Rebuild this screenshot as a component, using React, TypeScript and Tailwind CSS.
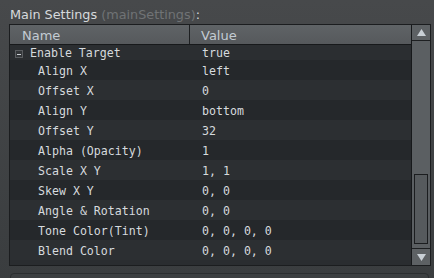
import React from "react";

const rows: { name: string; value: string }[] = [
  { name: "Align X", value: "left" },
  { name: "Offset X", value: "0" },
  { name: "Align Y", value: "bottom" },
  { name: "Offset Y", value: "32" },
  { name: "Alpha (Opacity)", value: "1" },
  { name: "Scale X Y", value: "1, 1" },
  { name: "Skew X Y", value: "0, 0" },
  { name: "Angle & Rotation", value: "0, 0" },
  { name: "Tone Color(Tint)", value: "0, 0, 0, 0" },
  { name: "Blend Color", value: "0, 0, 0, 0" },
];

const mono = { fontFamily: '"DejaVu Sans Mono", "Liberation Mono", monospace' };
const sans = { fontFamily: '"DejaVu Sans", "Liberation Sans", sans-serif' };

export default function App() {
  return (
    <div className="w-[434px] h-[278px] overflow-hidden bg-gradient-to-b from-[#47494b] to-[#3a3d3f] flex flex-col" style={sans}>
      <div className="h-[24px] shrink-0 pl-[10px] pt-[7px] text-[12.8px] leading-[16px] text-[#d6d9dc] whitespace-nowrap">
        Main Settings <span className="text-[#707375]">(mainSettings)</span>:
      </div>
      <div className="ml-[9px] w-[422px] h-[242px] shrink-0 border border-[#1b1d1f] flex bg-[#2a2d30]">
        <div className="flex-1 flex flex-col overflow-hidden">
          <div className="h-[20px] flex border-b border-[#17191b] bg-gradient-to-b from-[#5f6366] to-[#56595c] text-[13px] leading-[19px] text-[#c3cbd3] shrink-0 pt-[1px]">
            <div className="w-[180px] pl-[12px] border-r border-[#1d1f21] -mt-[1px] pt-[1px]">Name</div>
            <div className="pl-[11px]">Value</div>
          </div>
          <div className="flex-1 flex flex-col text-[11.6px] text-[#d6dade]" style={mono}>
            <div className="h-[15px] shrink-0 flex items-center bg-[#2b2e31] pt-[3px]">
              <div className="w-[180px] flex items-center pl-[5px]">
                <div className="w-[8px] h-[8px] border border-[#5a5d60] bg-[#34373a] flex items-center justify-center mr-[7px]">
                  <div className="w-[4px] h-[1px] bg-[#d0d4d8]" />
                </div>
                <span>Enable Target</span>
              </div>
              <div className="pl-[12px]">true</div>
            </div>
            {rows.map((r, i) => (
              <div
                key={r.name}
                className={`h-[20px] shrink-0 flex items-center whitespace-pre pt-[4px] ${i % 2 === 0 ? "bg-[#25282b]" : "bg-[#2c2f32]"}`}
              >
                <div className="w-[180px] pl-[28px]">{r.name}</div>
                <div className="pl-[12px]">{r.value}</div>
              </div>
            ))}
            <div className="flex-1 bg-[#2a2d30]" />
          </div>
        </div>
        <div className="w-[19px] border-l border-[#17191b] flex flex-col bg-[#5b5f62]">
          <div className="h-[16px] shrink-0 border-b border-[#1d1f21] flex items-center justify-center bg-[#5d6164]">
            <svg width="9" height="7" viewBox="0 0 9 7"><polygon points="4.5,0 9,7 0,7" fill="#c9d0d6" /></svg>
          </div>
          <div className="flex-1 flex flex-col px-[2px]">
            <div className="h-[133px] shrink-0" />
            <div className="h-[70px] shrink-0 border border-[#1b1d1f] bg-[#565a5d]" />
            <div className="flex-1" />
          </div>
          <div className="h-[17px] shrink-0 border-t border-[#1d1f21] flex items-center justify-center bg-[#5d6164]">
            <svg width="9" height="7" viewBox="0 0 9 7"><polygon points="0,0 9,0 4.5,7" fill="#c9d0d6" /></svg>
          </div>
        </div>
      </div>
      <div className="mt-[7px] ml-[10px] w-[419px] h-[20px] rounded-[4px] border border-[#2b2e30] bg-[#3c3f41] shrink-0" />
    </div>
  );
}
